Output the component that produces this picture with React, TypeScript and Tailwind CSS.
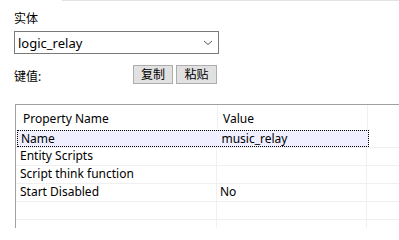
import React from "react";

const font = { fontFamily: '"Noto Sans", "Noto Sans CJK SC", sans-serif' };

const rows = [
    { name: "Name", value: "music_relay", selected: true },
    { name: "Entity Scripts", value: "" },
    { name: "Script think function", value: "" },
    { name: "Start Disabled", value: "No" },
    { name: "", value: "" },
    { name: "", value: "" },
];

export default function App() {
    return (
        <div
            className="relative w-[399px] h-[228px] overflow-hidden bg-white text-[12px] text-black"
            style={font}
        >
            <div className="ml-[62px] h-px bg-[#e3e3e3]" />
            <div className="pl-[14px] pt-[10px]">
                <div className="leading-[16px]">实体</div>
                <div className="mt-[4px] flex h-[23px] w-[205px] items-center justify-between border border-[#7a7a7a] pl-[3px] pr-[4px]">
                    <span className="text-[13px] leading-[16px]">logic_relay</span>
                    <svg width="10" height="6" viewBox="0 0 10 6" className="mr-[1px]">
                        <path d="M1 1 L5 4.5 L9 1" fill="none" stroke="#555" strokeWidth="1" />
                    </svg>
                </div>
                <div className="mt-[11px] flex h-[19px] items-center">
                    <span className="w-[119px] leading-[16px] pt-[5px]">键值:</span>
                    <button className="h-[19px] w-[40px] border border-[#adadad] bg-[#e1e1e1] text-[12px] leading-[16px]">
                        复制
                    </button>
                    <button className="ml-[3px] h-[19px] w-[41px] border border-[#adadad] bg-[#e1e1e1] text-[12px] leading-[16px]">
                        粘贴
                    </button>
                </div>
            </div>
            <div className="ml-[15px] mt-[20px] border-l border-t border-[#a0a0a0]">
                <div className="flex h-[25px] items-center">
                    <div className="w-[202px] pl-[7px] pt-[2px] border-r border-[#f0f0f0] h-full flex items-center">
                        Property Name
                    </div>
                    <div className="w-[150px] pl-[5px] pt-[2px] border-r border-[#f0f0f0] h-full flex items-center">
                        Value
                    </div>
                </div>
                {rows.map((r, i) => (
                    <div key={i} className="flex h-[18px] border-b border-[#f0f0f0]">
                        <div
                            className={
                                "flex w-[352px] " +
                                (r.selected
                                    ? "ml-[1px] -mr-[1px] border border-dotted border-black bg-[#eeeeff]"
                                    : "")
                            }
                        >
                            <div
                                className={
                                    "w-[201px] leading-[16px] " +
                                    (r.selected ? "pl-[3px]" : "pl-[4px] border-r border-[#f0f0f0]")
                                }
                            >
                                {r.name}
                            </div>
                            <div
                                className={
                                    "w-[150px] leading-[16px] pl-[3px] " +
                                    (r.selected ? "" : "border-r border-[#f0f0f0]")
                                }
                            >
                                {r.value}
                            </div>
                        </div>
                    </div>
                ))}
            </div>
        </div>
    );
}
